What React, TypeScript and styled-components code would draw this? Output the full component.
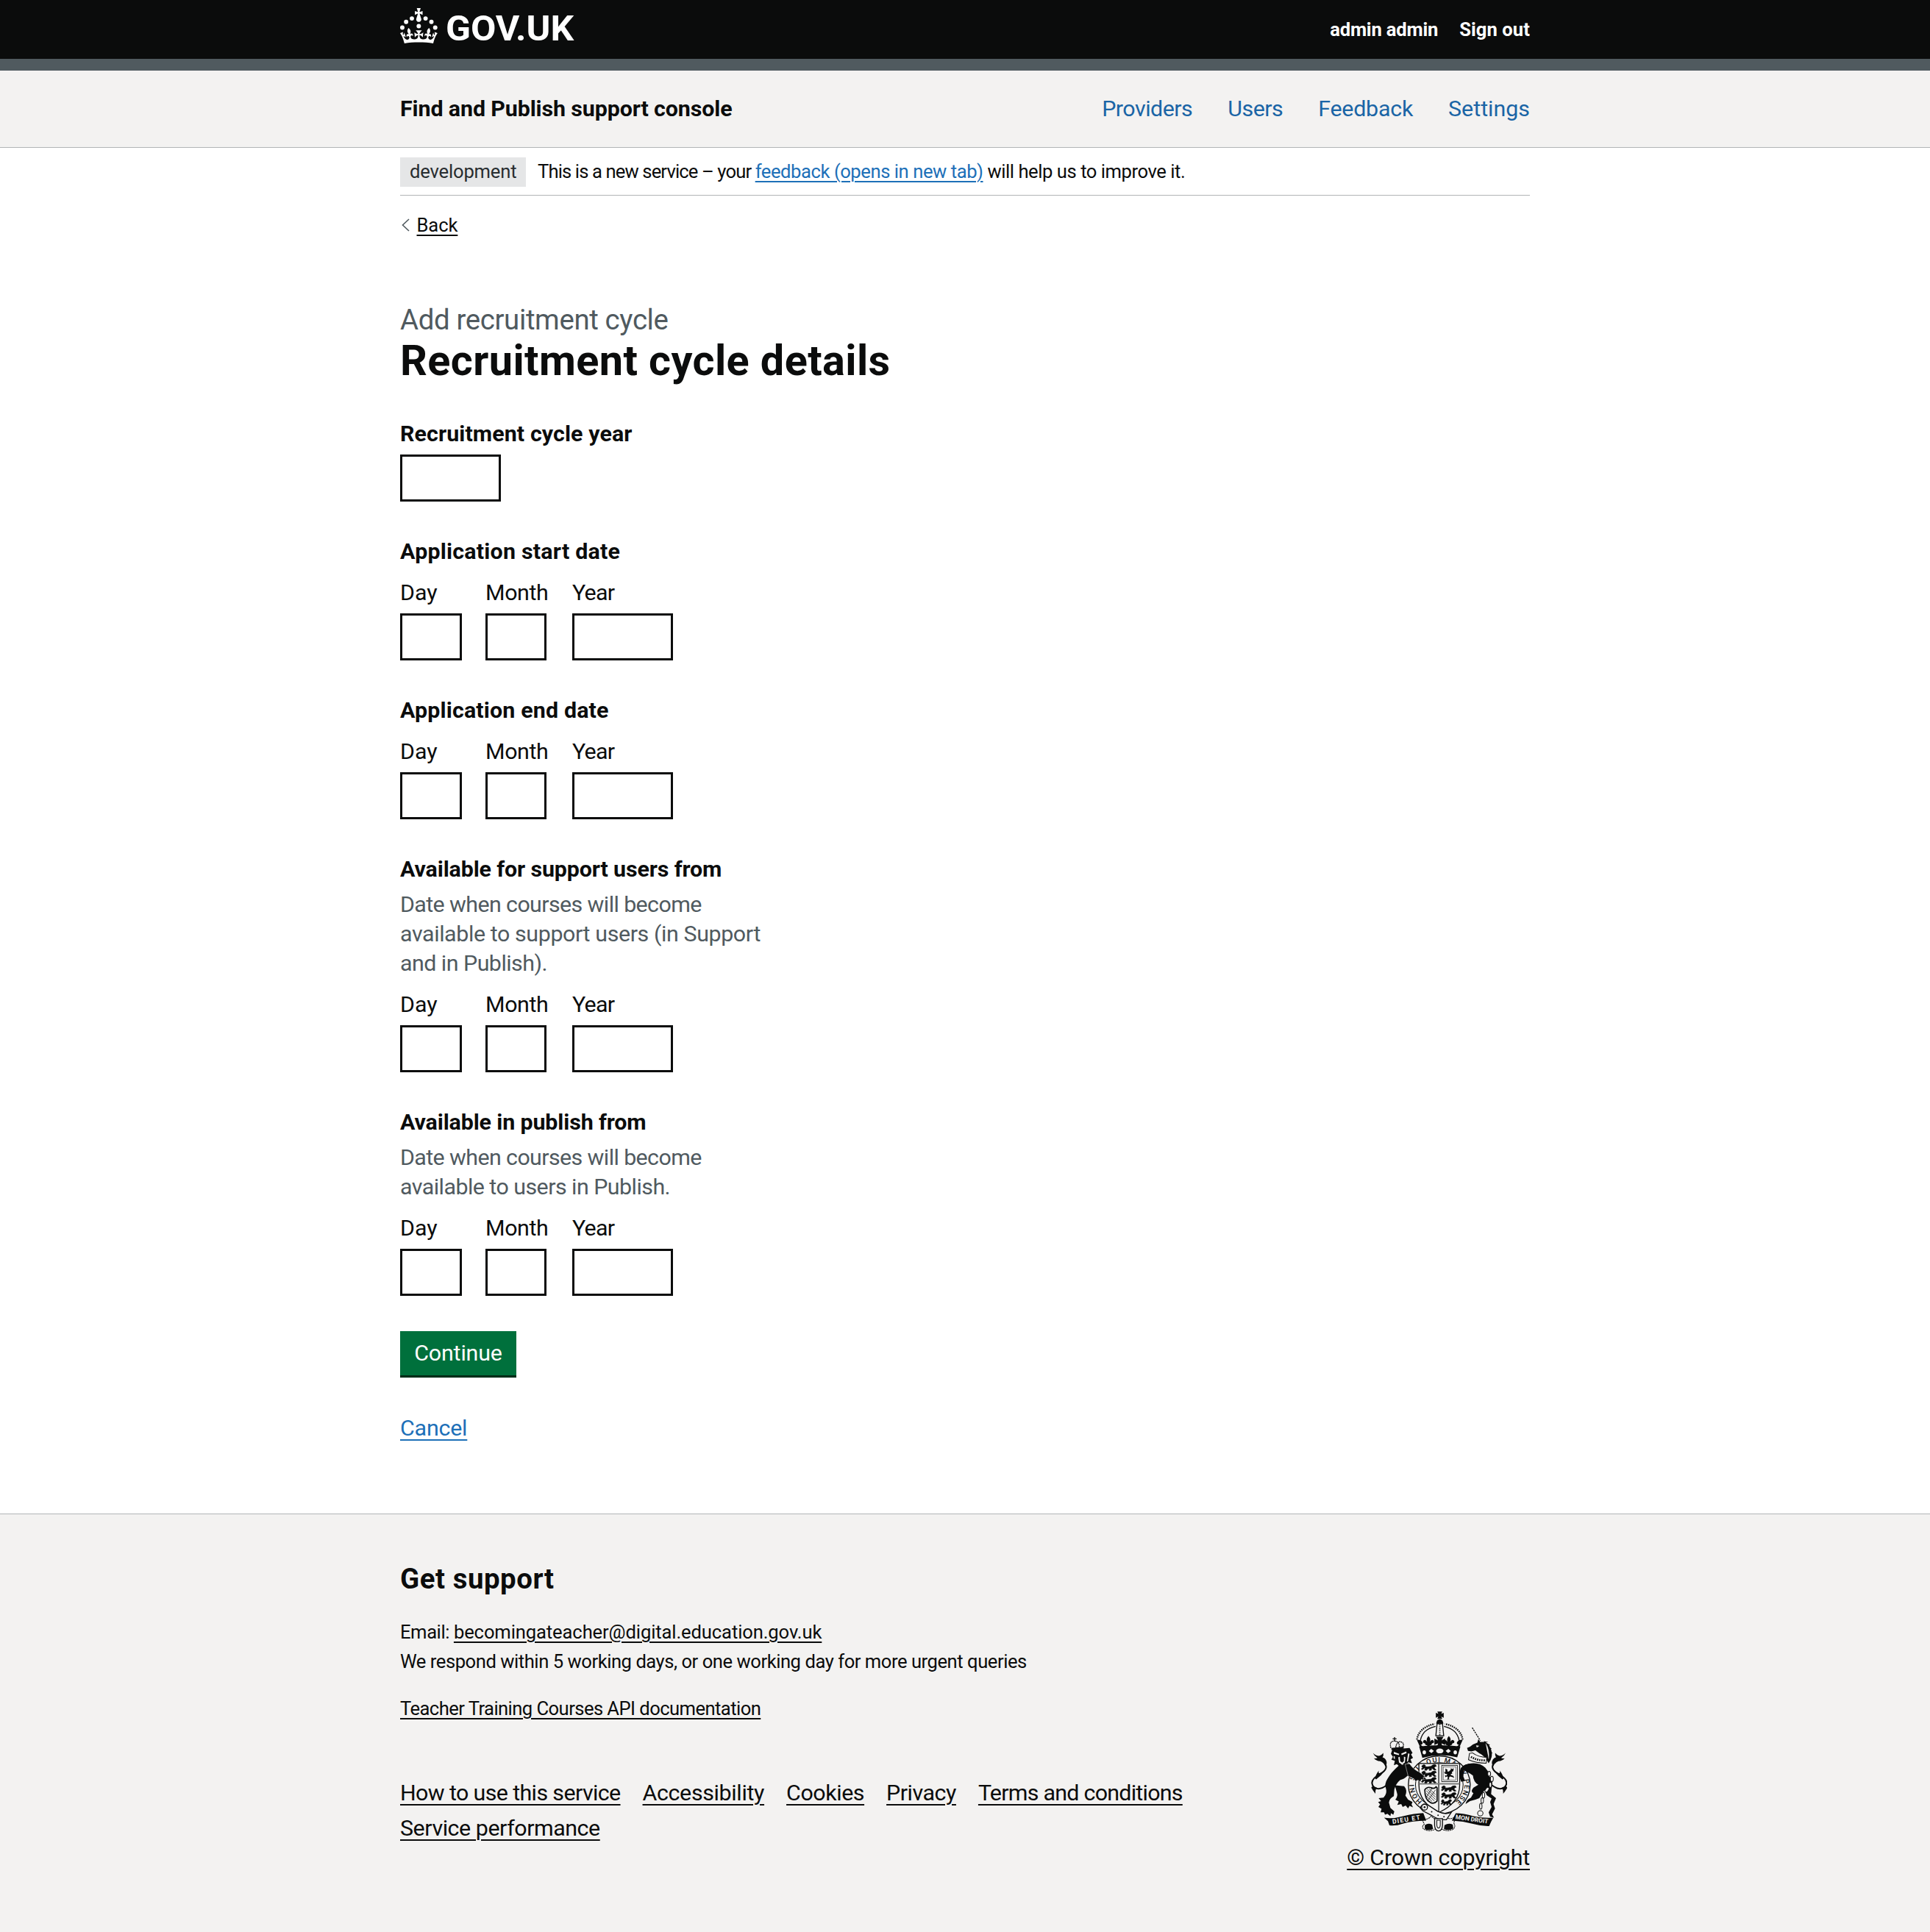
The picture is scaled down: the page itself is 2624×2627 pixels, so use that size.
import React from 'react';
import styled, { createGlobalStyle } from 'styled-components';

const ink = '#0b0c0c';
const paper = '#f3f2f1';
const secondary = '#505a5f';
const rule = '#b1b4b6';
const linkBlue = '#1d70b8';

const GlobalStyle = createGlobalStyle`
  * { box-sizing: border-box; }
  body {
    margin: 0;
    background: #fff;
    color: ${ink};
    font-family: Roboto, Arial, sans-serif;
    font-size: 30.4px;
    line-height: 40px;
  }
`;

type Tracked = { $track?: number };
const track = (p: Tracked) => `${p.$track ?? 0}px`;

const Container = styled.div`
  width: 1536px;
  margin: 0 auto;
`;

const Header = styled.header`
  background: ${ink};
  border-bottom: 16px solid ${secondary};
`;
const HeaderInner = styled(Container)`
  display: flex;
  height: 80px;
  justify-content: space-between;
  align-items: center;
`;
const Logo = styled.svg`
  display: block;
  margin-bottom: 10px;
  overflow: visible;
  fill: #fff;
`;
const LogoText = styled.text`
  font-family: Roboto, Arial, sans-serif;
  font-size: 59px;
  font-weight: 700;
`;
const AccountNav = styled.nav`
  display: flex;
  gap: 29px;
`;
const AccountLink = styled.a<Tracked>`
  color: #fff;
  font-size: 25.6px;
  line-height: 32px;
  font-weight: 700;
  letter-spacing: ${track};
`;

const ServiceBar = styled.div`
  background: ${paper};
  border-bottom: 1px solid ${rule};
`;
const ServiceInner = styled(Container)`
  display: flex;
  height: 104px;
  align-items: center;
  justify-content: space-between;
`;
const ServiceName = styled.span<Tracked>`
  font-weight: 700;
  letter-spacing: ${track};
`;
const ServiceNav = styled.nav`
  display: flex;
  gap: 48px;
`;
const ServiceLink = styled.a<Tracked>`
  color: #1a65a6;
  letter-spacing: ${track};
`;

const PhaseBanner = styled(Container)`
  display: flex;
  align-items: center;
  gap: 16px;
  padding: 13px 0 11px;
  border-bottom: 1px solid ${rule};
  font-size: 25.6px;
  line-height: 32px;
`;
const Tag = styled.strong`
  width: 171px;
  padding: 3px 0 5px 13px;
  background: #e5e6e7;
  color: #282d30;
  font-weight: 400;
  letter-spacing: -0.18px;
`;
const Tracking = styled.span<Tracked>`
  letter-spacing: ${track};
`;
const PhaseText = styled.span`
  padding-bottom: 2px;
  white-space: pre;
`;
const Link = styled.a<Tracked & { $blue?: boolean }>`
  color: ${(p) => (p.$blue ? linkBlue : ink)};
  letter-spacing: ${track};
  text-decoration: underline;
  text-decoration-thickness: 2px;
  text-underline-offset: 0.1578em;
`;

const BackRow = styled(Container)`
  display: flex;
  align-items: center;
  gap: 9.5px;
  margin-top: 24px;
  padding-left: 2px;
  font-size: 25.6px;
  line-height: 32px;
`;

const Main = styled(Container).attrs({ as: 'main' })`
  padding: 88px 0 96px;
`;
const Caption = styled.span`
  display: block;
  color: ${secondary};
  font-size: 38.4px;
  line-height: 49px;
  letter-spacing: -0.36px;
`;
const PageTitle = styled.h1`
  margin: 0 0 47px;
  font-size: 57.6px;
  line-height: 64px;
  letter-spacing: 0.41px;
`;
const FormGroup = styled.div`
  margin-bottom: 48px;
`;
const GroupLabel = styled.label<Tracked & { $gap: number }>`
  display: block;
  margin-bottom: ${(p) => p.$gap}px;
  font-weight: 700;
  letter-spacing: ${track};
`;
const Hint = styled.div`
  margin-bottom: 16px;
  color: ${secondary};
`;
const HintLine = styled.span<Tracked>`
  display: block;
  letter-spacing: ${track};
`;
const DateRow = styled.div`
  display: flex;
`;
const DateItem = styled.div<{ $width: number }>`
  width: ${(p) => p.$width}px;
`;
const DateLabel = styled.label<Tracked>`
  display: block;
  margin-bottom: 8px;
  letter-spacing: ${track};
`;
const Input = styled.input<{ $width: number }>`
  display: block;
  width: ${(p) => p.$width}px;
  height: 64px;
  border: 3px solid ${ink};
  border-radius: 0;
  padding: 8px;
  background: #fff;
  font: inherit;
`;
const Button = styled.button`
  display: block;
  width: 158px;
  height: 60px;
  margin: 0 0 52px;
  padding: 0;
  border: 0;
  background: #00703c;
  box-shadow: 0 3.2px 0 #002d18;
  color: #fff;
  font: inherit;
  letter-spacing: -0.16px;
`;

const Footer = styled.footer`
  border-top: 1px solid ${rule};
  background: ${paper};
  padding: 64px 0 81px;
`;
const FooterInner = styled(Container)`
  display: flex;
  align-items: flex-end;
  justify-content: space-between;
`;
const FooterMain = styled.div`
  width: 1180px;
  padding-bottom: 40px;
`;
const FooterTitle = styled.h2`
  margin: 0 0 28px;
  font-size: 38.4px;
  line-height: 48px;
  letter-spacing: 0.55px;
`;
const Contact = styled.div`
  margin-bottom: 24px;
  font-size: 25.6px;
  line-height: 40px;
  white-space: pre;
`;
const FooterLinks = styled.ul`
  display: flex;
  flex-wrap: wrap;
  gap: 8px 30px;
  margin: 75px 0 0;
  padding: 0;
  list-style: none;
`;
const Copyright = styled.div`
  display: flex;
  flex-direction: column;
  align-items: center;
  gap: 14px;
`;
const Motto = styled.text<{ $size: number; $light?: boolean }>`
  font-family: Roboto, Arial, sans-serif;
  font-size: ${(p) => p.$size}px;
  font-weight: ${(p) => (p.$light ? 700 : 500)};
  fill: ${(p) => (p.$light ? paper : ink)};
  stroke: none;
`;

const GovLogo = () => (
  <Logo width="259" height="48" viewBox="0 0 324 60" role="img" aria-label="GOV.UK">
    <circle cx="20" cy="17.6" r="3.7" />
    <circle cx="10.2" cy="23.5" r="3.7" />
    <circle cx="3.7" cy="33.2" r="3.7" />
    <circle cx="31.7" cy="30.6" r="3.7" />
    <circle cx="43.3" cy="17.6" r="3.7" />
    <circle cx="53.2" cy="23.5" r="3.7" />
    <circle cx="59.7" cy="33.2" r="3.7" />
    <path d="M33.1,9.8c.2-.1.3-.3.5-.5l4.6,2.4v-6.8l-4.6,1.5c-.1-.2-.3-.3-.5-.5l1.9-5.9h-6.7l1.9,5.9c-.2.1-.3.3-.5.5l-4.6-1.5v6.8l4.6-2.4c.1.2.3.3.5.5l-2.6,8c-.9,2.8,1.2,5.7,4.1,5.7h0c3,0,5.1-2.9,4.1-5.7l-2.6-8ZM37,37.9s-3.4,3.8-4.1,6.1c2.2,0,4.2-.5,6.4-2.8l-.7,8.5c-2-2.8-4.4-4.1-5.7-3.8.1,3.1.5,6.7,5.8,7.2,3.7.3,6.7-1.5,7-3.8.4-2.6-2-4.3-3.7-1.6-1.4-4.5,2.4-6.1,4.9-3.2-1.9-4.5-1.8-7.7,2.4-10.9,3,4,2.6,7.3-1.2,11.1,2.4-1.3,6.2,0,4,4.6-1.2-2.8-3.7-2.2-4.2.2-.3,1.7.7,3.7,3,4.2,1.9.3,4.7-.9,7-5.9-1.3,0-2.4.7-3.9,1.7l2.4-8c.6,2.3,1.4,3.7,2.2,4.5.6-1.6.5-2.8,0-5.3l5,1.8c-2.6,3.6-5.2,8.7-7.3,17.5-7.4-1.1-15.7-1.7-24.5-1.7h0c-8.8,0-17.1.6-24.5,1.7-2.1-8.9-4.7-13.9-7.3-17.5l5-1.8c-.5,2.5-.6,3.7,0,5.3.8-.8,1.6-2.3,2.2-4.5l2.4,8c-1.5-1-2.6-1.7-3.9-1.7,2.3,5,5.2,6.2,7,5.9,2.3-.4,3.3-2.4,3-4.2-.5-2.4-3-3.1-4.2-.2-2.2-4.6,1.6-6,4-4.6-3.7-3.7-4.2-7.1-1.2-11.1,4.2,3.2,4.3,6.4,2.4,10.9,2.5-2.8,6.3-1.3,4.9,3.2-1.8-2.7-4.1-1-3.7,1.6.3,2.3,3.3,4.1,7,3.8,5.4-.5,5.7-4.2,5.8-7.2-1.3-.2-3.7,1-5.7,3.8l-.7-8.5c2.2,2.3,4.2,2.7,6.4,2.8-.7-2.3-4.1-6.1-4.1-6.1h10.6,0Z" />
    <LogoText x="77.5" y="55.6" textLength="218" lengthAdjust="spacingAndGlyphs">GOV.UK</LogoText>
  </Logo>
);

const PassantLion = ({ x, y, w = 1 }: { x: number; y: number; w?: number }) => (
  <path
    transform={`translate(${x} ${y}) scale(${w} 1)`}
    stroke={ink}
    strokeWidth="2.5"
    d="M2,4l8-4 6,4-2,5 10,0 14-2 8-6 10-1 4,6-6,2-3,5 8,8-8,1-6-6-6,0 1,6-9,1 2-7-9,1-4,6-8-1 4-7-5-1-8,6-4-3 7-6-5-2z"
  />
);

const Fleur = ({ x, y }: { x: number; y: number }) => (
  <path
    transform={`translate(${x} ${y})`}
    d="M0,-28q11,12 5,24q10,-14 17,-3q2,9-8,9q0,8-9,8l3,14h-16l3,-14q-9,0-9,-8q-10,0-8,-9q7,-11 17,3q-6,-12 5,-24z"
  />
);

const Tail = () => (
  <g>
    <path d="M196,352Q168,374 146,361Q128,342 146,323Q160,309 180,299Q207,280 184,254" fill="none" stroke={ink} strokeWidth="6" />
    <path d="M141,220Q152,232 166,232Q178,228 183,220Q185,230 180,238Q196,242 197,262L192,276Q184,258 170,254Q154,253 145,242Q155,243 159,240Q146,233 141,220Z" />
    <path d="M150,326Q150,310 165,292Q161,306 173,302L190,291Q174,314 154,328Z" />
    <path d="M140,354L157,362Q150,370 151,386Q142,376 134,362Z" />
  </g>
);

const Crest = () => (
  <svg width="187" height="167" viewBox="127 45 560 500" fill={ink} aria-hidden="true">
    <defs>
      <path id="garter" d="M345,420A103,92 0 1 1 477,420" />
    </defs>

    {/* supporters */}
    <Tail />
    <g transform="translate(822 0) scale(-1 1)"><Tail /></g>
    <path d="M246,272L286,262Q304,290 334,306L352,318 345,323 350,330 338,330 334,339 322,333 300,326 282,313Q266,328 252,330Q234,345 228,368L226,396Q208,405 206,422L212,444 228,458 224,472 214,466 212,478 200,468 190,472 186,462 172,462 176,448 163,440 170,430 162,420 174,416 164,404 184,402Q200,385 194,366Q186,348 200,326Q214,300 246,272Z" />
    <path d="M230,352L268,356Q282,372 273,394L284,410 302,420 298,430 304,442 290,436 284,446 274,434 262,440 256,428 240,432 246,418 232,410Q244,396 238,380Z" />
    <path d="M220,206L290,200 302,220 296,226 304,240 294,246 300,262 284,258 276,272 262,264 250,276 238,266 226,270 230,252 216,248 222,236 214,224Z" />
    <path d="M226,216l22,8-2,5-20-5zM276,214l-20,9 2,6 20-8zM244,238l6-2 2,18 8,6 7-7 0-18 6,2-2,22-12,8-12-8zM284,222l6,2-6,30-5,2zM225,232l5,2 0,12-5-4z" fill={paper} />
    <path d="M214,200Q206,172 228,172Q250,172 248,198M234,198Q236,178 250,174Q272,178 262,198" fill="none" stroke={ink} strokeWidth="4" strokeDasharray="5 2" />
    <path d="M227,156h4v5h6v4h-6v8h-4v-8h-6v-4h6zM216,200l50-5v8l-50,5z" />

    <path d="M506,300Q498,270 530,264Q574,256 598,280Q622,304 612,345Q606,366 592,376L574,404Q556,412 536,416L518,428Q520,412 540,402L550,384Q536,378 550,362L570,350Q550,338 548,312Q532,300 510,292Z" />
    <path d="M612,312Q634,330 624,366L622,388 642,404 632,428 638,446 626,470 634,484 618,480 612,462 624,440 618,420 624,406 604,392 596,372Z" />
    <path d="M524,200Q538,196 548,186L566,178 570,164 578,176Q610,170 622,206Q632,236 612,262L602,246Q588,228 574,222L558,210 542,214 528,212Z" />
    <path d="M592,172l18,4-10,2 18,10-10,2 17,14-11,0 14,18-13-3 9,20-11-5 1,16-9-3z" />
    <path d="M600,182q16,24 12,62M562,190l10,2-8,5z" fill={paper} stroke={paper} strokeWidth="1.5" />
    <path d="M534,222L546,220Q570,238 604,238L602,262Q560,262 530,248Z" fill={paper} stroke={ink} strokeWidth="3" />
    <path d="M540,236Q566,252 600,250" fill="none" stroke={ink} strokeWidth="8" strokeDasharray="5 4" />
    <path d="M545,117L578,170" stroke={ink} strokeWidth="4" strokeDasharray="7 3" />
    <g fill={paper} stroke={ink} strokeWidth="3">
      <ellipse cx="614" cy="305" rx="6" ry="10" />
      <ellipse cx="625" cy="326" rx="6" ry="11" />
      <ellipse cx="619" cy="350" rx="5" ry="11" />
      <ellipse cx="605" cy="370" rx="6" ry="11" transform="rotate(35 605 370)" />
      <ellipse cx="591" cy="392" rx="5" ry="12" />
      <ellipse cx="586" cy="414" rx="5" ry="11" />
      <ellipse cx="580" cy="437" rx="5" ry="12" />
      <circle cx="578" cy="466" r="11" />
    </g>

    {/* garter and shield */}
    <ellipse cx="411" cy="350" rx="126" ry="118" fill={paper} stroke={ink} strokeWidth="4" />
    <ellipse cx="411" cy="350" rx="97" ry="90" fill={paper} stroke={ink} strokeWidth="3" />
    <Motto $size={28}>
      <textPath href="#garter" startOffset="1%" textLength="465">HONI SOIT QUI MAL Y PENSE</textPath>
    </Motto>
    <path d="M328,263H494V350Q494,424 411,462Q328,424 328,350Z" fill={paper} stroke={ink} strokeWidth="4" />
    <path d="M409,263V460M328,346H494" stroke={ink} strokeWidth="5" />
    <path d="M409,263V460M328,346H494" stroke={paper} strokeWidth="1.5" />
    <PassantLion x={339} y={268} />
    <PassantLion x={339} y={294} />
    <PassantLion x={339} y={320} />
    <PassantLion x={420} y={354} />
    <PassantLion x={420} y={382} />
    <PassantLion x={419} y={410} w={0.7} />
    <rect x="421" y="271" width="64" height="66" fill="none" stroke={ink} strokeWidth="2.5" />
    <rect x="427" y="277" width="52" height="54" fill="none" stroke={ink} strokeWidth="1.5" />
    <path d="M436,284l8,4 0,8 6,0 8-8 0-6 6,4 6-4-2,12-6,4 2,6-6,2 0,4 10,4 4,8-8-4-10-2-4,6 2,6-10,0 4-5-2-8-8,4-2-8 6,2 4-6-10-2-4-8 6,2z" />
    <path d="M352,370Q362,356 378,362Q392,368 398,358L402,362V416Q388,432 372,420Q352,410 352,370Z" fill="none" stroke={ink} strokeWidth="5" />
    <path d="M358,374l38,36M362,368l34,32M370,366l26,24M357,384l34,32M358,396l24,22M366,412l30-42M358,400l24-36" stroke={ink} strokeWidth="2.2" />
    <path d="M272,266L290,264Q306,288 330,298L352,316 345,321 350,329 338,328 334,338 324,331 314,336 308,326 284,314Z" stroke={paper} strokeWidth="1.5" />
    <path d="M534,264Q500,268 496,290L493,318 500,338 516,334 509,316 511,292 538,298Z" />

    {/* crown */}
    <path d="M328,190Q320,150 360,120Q385,104 413,104Q441,104 466,120Q506,150 498,190L486,225H340Z" fill={paper} />
    <path d="M320,166Q328,116 392,102M506,166Q498,116 434,102" fill="none" stroke={ink} strokeWidth="7" strokeDasharray="5 3.5" />
    <path d="M334,170Q342,124 396,112M492,170Q484,124 430,112" fill="none" stroke={ink} strokeWidth="4" />
    <path d="M403,52h20l-4,9 10-4v20l-10-5 4,10h-20l4-10-10,5v-20l10,4zM402,88q11-10 22,0l4,12h-30z" />
    <path d="M402,101H424L429,150H397Z" fill={paper} stroke={ink} strokeWidth="4" />
    <path d="M413,104V148" stroke={ink} strokeWidth="5" strokeDasharray="4 4" />
    <Fleur x={367} y={179} />
    <Fleur x={450} y={179} />
    <path d="M398,154h30l-8,15 15-7v26l-15-7 6,20h-26l6-20-15,7v-26l15,7z" />
    <path d="M320,168Q338,164 344,180Q340,190 334,186Q346,196 350,204L336,204ZM506,168Q488,164 482,180Q486,190 492,186Q480,196 476,204L490,204Z" />
    <path d="M329,194Q413,184 497,194L484,238Q413,220 342,240Z" />
    <g fill={paper}>
      <ellipse cx="413" cy="212" rx="15" ry="10" />
      <path d="M368,213l10-9 11,8-10,9zM437,212l11-8 10,9-11,8z" />
      <ellipse cx="350" cy="218" rx="7" ry="8" />
      <ellipse cx="476" cy="218" rx="7" ry="8" />
    </g>

    {/* belt, compartment and ribbon */}
    <path d="M340,490Q362,494 378,478L396,492V530Q372,542 350,532Q336,522 350,510ZM478,478Q460,494 440,484L420,492V530Q444,542 466,532Q480,522 470,506Z" fill={paper} stroke={ink} strokeWidth="3" strokeDasharray="7 2" />
    <path d="M352,514Q366,504 382,512L386,530Q366,538 352,530ZM432,514Q450,504 466,512L468,528Q450,538 430,530Z" />
    <path d="M334,444Q340,424 362,430L404,458Q436,474 460,462L440,492Q410,494 382,476L344,456Z" fill={paper} stroke={ink} strokeWidth="4" />
    <circle cx="351" cy="441" r="12" fill={paper} stroke={ink} strokeWidth="4" />
    <circle cx="351" cy="441" r="4" />
    <circle cx="380" cy="460" r="3" />
    <circle cx="406" cy="474" r="3" />
    <circle cx="430" cy="480" r="3" />
    <path d="M392,488H424V516Q422,538 408,538Q394,538 392,516Z" fill={paper} stroke={ink} strokeWidth="4" />
    <path d="M401,494H415V514Q414,526 408,526Q402,526 401,514Z" fill={paper} stroke={ink} strokeWidth="3" />
    <path d="M186,484Q222,490 264,478Q310,466 346,465L358,496Q300,498 262,508Q236,518 208,515L202,498Z" />
    <path d="M478,466Q510,466 550,478Q590,487 631,484L622,500 614,518Q584,519 552,510Q508,498 462,496Z" />
    <Motto $size={26} $light x="221" y="509" textLength="114" transform="rotate(-9 221 509)">DIEU ET</Motto>
    <Motto $size={25} $light x="476" y="489" textLength="134" transform="rotate(8 476 489)">MON DROIT</Motto>
  </svg>
);

const DateFields = ({ id }: { id: string }) => (
  <DateRow>
    <DateItem $width={116}>
      <DateLabel htmlFor={`${id}-day`}>Day</DateLabel>
      <Input id={`${id}-day`} $width={84} />
    </DateItem>
    <DateItem $width={118}>
      <DateLabel htmlFor={`${id}-month`} $track={-0.4}>Month</DateLabel>
      <Input id={`${id}-month`} $width={83} />
    </DateItem>
    <DateItem $width={137}>
      <DateLabel htmlFor={`${id}-year`} $track={-0.75}>Year</DateLabel>
      <Input id={`${id}-year`} $width={137} />
    </DateItem>
  </DateRow>
);

type Line = { text: string; track: number };
const dateGroups: { id: string; label: Line; hint?: Line[] }[] = [
  { id: 'start', label: { text: 'Application start date', track: 0.22 } },
  { id: 'end', label: { text: 'Application end date', track: 0.15 } },
  {
    id: 'support',
    label: { text: 'Available for support users from', track: -0.13 },
    hint: [
      { text: 'Date when courses will become', track: -0.6 },
      { text: 'available to support users (in Support', track: -0.4 },
      { text: 'and in Publish).', track: -0.53 },
    ],
  },
  {
    id: 'publish',
    label: { text: 'Available in publish from', track: -0.13 },
    hint: [
      { text: 'Date when courses will become', track: -0.6 },
      { text: 'available to users in Publish.', track: -0.54 },
    ],
  },
];
const serviceLinks: Line[] = [
  { text: 'Providers', track: -0.5 },
  { text: 'Users', track: -0.5 },
  { text: 'Feedback', track: -0.25 },
  { text: 'Settings', track: 0 },
];
const footerLinks: Line[] = [
  { text: 'How to use this service', track: -0.62 },
  { text: 'Accessibility', track: -0.35 },
  { text: 'Cookies', track: -0.43 },
  { text: 'Privacy', track: -0.48 },
  { text: 'Terms and conditions', track: -0.74 },
  { text: 'Service performance', track: -0.45 },
];

export default function App() {
  return (
    <>
      <GlobalStyle />
      <Header>
        <HeaderInner>
          <GovLogo />
          <AccountNav>
            <AccountLink $track={-0.2}>admin admin</AccountLink>
            <AccountLink $track={0.07}>Sign out</AccountLink>
          </AccountNav>
        </HeaderInner>
      </Header>
      <ServiceBar>
        <ServiceInner>
          <ServiceName $track={-0.12}>Find and Publish support console</ServiceName>
          <ServiceNav>
            {serviceLinks.map((l) => (
              <ServiceLink key={l.text} $track={l.track}>{l.text}</ServiceLink>
            ))}
          </ServiceNav>
        </ServiceInner>
      </ServiceBar>
      <PhaseBanner>
        <Tag>development</Tag>
        <PhaseText>
          <Tracking $track={-0.87}>This is a new service – your </Tracking>
          <Link $blue $track={-0.44}>feedback (opens in new tab)</Link>
          <Tracking $track={-0.45}> will help us to improve it.</Tracking>
        </PhaseText>
      </PhaseBanner>
      <BackRow>
        <svg width="11" height="18" viewBox="0 0 11 18" fill="none" stroke={secondary} strokeWidth="1.6">
          <path d="M10 1L1.5 9L10 17" />
        </svg>
        <Link $track={-0.1}>Back</Link>
      </BackRow>
      <Main>
        <Caption>Add recruitment cycle</Caption>
        <PageTitle>Recruitment cycle details</PageTitle>
        <FormGroup>
          <GroupLabel htmlFor="cycle-year" $gap={8} $track={0.09}>Recruitment cycle year</GroupLabel>
          <Input id="cycle-year" $width={137} />
        </FormGroup>
        {dateGroups.map((g) => (
          <FormGroup key={g.id}>
            <GroupLabel as="div" $gap={g.hint ? 8 : 16} $track={g.label.track}>{g.label.text}</GroupLabel>
            {g.hint && (
              <Hint>
                {g.hint.map((h) => (
                  <HintLine key={h.text} $track={h.track}>{h.text}</HintLine>
                ))}
              </Hint>
            )}
            <DateFields id={g.id} />
          </FormGroup>
        ))}
        <Button type="button">Continue</Button>
        <Link $blue $track={-0.2}>Cancel</Link>
      </Main>
      <Footer>
        <FooterInner>
          <FooterMain>
            <FooterTitle>Get support</FooterTitle>
            <Contact>
              <Tracking $track={-0.43}>Email: </Tracking>
              <Link $track={-0.12}>becomingateacher@digital.education.gov.uk</Link>
              <br />
              <Tracking $track={-0.46}>We respond within 5 working days, or one working day for more urgent queries</Tracking>
            </Contact>
            <Contact>
              <Link $track={-0.56}>Teacher Training Courses API documentation</Link>
            </Contact>
            <FooterLinks>
              {footerLinks.map((l) => (
                <li key={l.text}>
                  <Link $track={l.track}>{l.text}</Link>
                </li>
              ))}
            </FooterLinks>
          </FooterMain>
          <Copyright>
            <Crest />
            <Link $track={-0.17}>© Crown copyright</Link>
          </Copyright>
        </FooterInner>
      </Footer>
    </>
  );
}
